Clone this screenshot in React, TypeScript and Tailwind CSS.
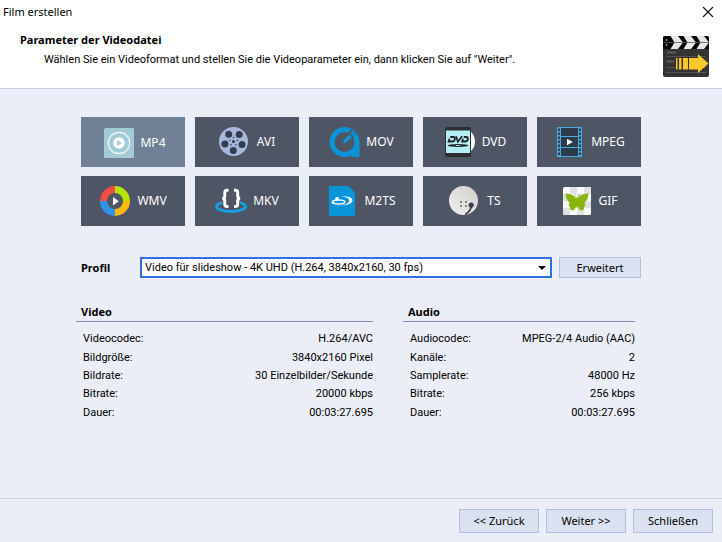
import React from "react";

type Row = [string, string];

const videoRows: Row[] = [
  ["Videocodec:", "H.264/AVC"],
  ["Bildgröße:", "3840x2160 Pixel"],
  ["Bildrate:", "30 Einzelbilder/Sekunde"],
  ["Bitrate:", "20000 kbps"],
  ["Dauer:", "00:03:27.695"],
];

const audioRows: Row[] = [
  ["Audiocodec:", "MPEG-2/4 Audio (AAC)"],
  ["Kanäle:", "2"],
  ["Samplerate:", "48000 Hz"],
  ["Bitrate:", "256 kbps"],
  ["Dauer:", "00:03:27.695"],
];

function Svg({ children }: { children: React.ReactNode }) {
  return (
    <svg viewBox="0 0 32 32" className="size-8 shrink-0" aria-hidden="true">
      {children}
    </svg>
  );
}

const Mp4Icon = () => (
  <Svg>
    <rect x="2" y="1" width="30" height="30" rx="1.5" fill="#a2cbd5" />
    <circle cx="17" cy="16" r="10.7" fill="none" stroke="#f4fafb" strokeWidth="1.2" />
    <circle cx="17" cy="16" r="5.8" fill="#fff" />
    <path d="M15.2 12.9v6.2l4.9-3.1z" fill="#a2cbd5" />
  </Svg>
);

const AviIcon = () => (
  <Svg>
    <circle cx="14.5" cy="15.5" r="14.5" fill="#a9b7dd" />
    <g fill="#333d50">
      <circle cx="9.7" cy="8.2" r="3.5" />
      <circle cx="20.2" cy="8.5" r="3.5" />
      <circle cx="5.9" cy="18" r="3.5" />
      <circle cx="23" cy="18.6" r="3.5" />
      <circle cx="14.3" cy="24.5" r="3.5" />
      <circle cx="14.5" cy="15.5" r="1.6" />
      <circle cx="14.5" cy="11.5" r=".8" />
      <circle cx="18.3" cy="14.2" r=".8" />
      <circle cx="16.9" cy="18.7" r=".8" />
      <circle cx="12.1" cy="18.7" r=".8" />
      <circle cx="10.7" cy="14.2" r=".8" />
    </g>
  </Svg>
);

const MovIcon = () => (
  <Svg>
    <path
      fillRule="evenodd"
      fill="#0b93d6"
      d="M16.500 1a15 15 0 0 1 15 15v15h-7l-2-1.200A15 15 0 1 1 16.500 1zM16.500 6a10 10 0 1 0 0 20 10 10 0 0 0 0-20z"
    />
    <path d="m18 9 5-5.500 5 4.500-5 5z" fill="#4e5565" />
    <path d="M15.300 14.800 21.200 8.500l2.700 2.700-6.200 6h-2.400z" fill="#0b93d6" />
    <path d="m22.200 7.500 2.200-2.200 2.700 2.600-2.200 2.300z" fill="#0b93d6" />
  </Svg>
);

const DvdIcon = () => (
  <Svg>
    <circle cx="17.5" cy="15.5" r="13.5" fill="#fff" />
    <rect x="1" y="1" width="26" height="30" rx="1.5" fill="#2c2f31" />
    <rect x="2" y="4.5" width="24" height="22.5" fill="#b5edf2" />
    <g fill="none" stroke="#202628" strokeWidth="1.800">
      <path d="M6.2 11h3.3c2.2 0 2 4.5-1.7 4.5H4.6l.9-2.8" />
      <path d="M12 10.3l1.9 5.4 4.2-5.4" />
      <path d="M19.8 11h2.6c2.4 0 2 4.5-1.6 4.5h-2.6l.8-2.8" />
    </g>
    <ellipse cx="14" cy="19.500" rx="10.500" ry="1.500" fill="#202628" />
    <ellipse cx="14" cy="19.500" rx="2.500" ry=".5" fill="#b5edf2" />
  </Svg>
);

const MpegIcon = () => (
  <Svg>
    <rect x="4" y="1" width="25" height="30" rx="1" fill="#49abe0" />
    <g fill="#2c3a4a">
      <rect x="8" y="2" width="17" height="8" />
      <rect x="8" y="11" width="17" height="10" />
      <rect x="8" y="22" width="17" height="8" />
      {[2, 6, 10, 14, 18, 22, 26].map((y) => (
        <React.Fragment key={y}>
          <rect x="5" y={y + 0.5} width="2" height="2.5" />
          <rect x="26" y={y + 0.5} width="2" height="2.5" />
        </React.Fragment>
      ))}
    </g>
    <path d="M14 12.7v6.6l5.8-3.3z" fill="#fff" />
  </Svg>
);

const WmvIcon = () => (
  <Svg>
    <g fill="none" strokeWidth="7">
      <path d="M4.5 16A11.5 11.5 0 0 1 16 4.5" stroke="#f04d45" />
      <path d="M16 4.5A11.5 11.5 0 0 1 27.5 16" stroke="#b6e600" />
      <path d="M27.5 16A11.5 11.5 0 0 1 16 27.5" stroke="#fdba04" />
      <path d="M16 27.5A11.5 11.5 0 0 1 4.5 16" stroke="#2f94e9" />
    </g>
    <path d="M14 12v8.4l5.8-4.2z" fill="#fff" />
  </Svg>
);

const MkvIcon = () => (
  <Svg>
    <ellipse cx="16" cy="21.5" rx="14.5" ry="5" fill="none" stroke="#12a2e6" strokeWidth="2.8" />
    <rect x="7" y="12" width="18" height="10" fill="#4e5565" />
    <g fill="none" stroke="#fff" strokeWidth="3">
      <path d="M13.5 5.2H12c-1.8 0-2.2.8-2.2 2.4v3.2c0 1.6-.8 2.7-2.5 2.7 1.7 0 2.5 1.1 2.5 2.7v2.8c0 1.6.4 2.4 2.2 2.4h1.5" />
      <path d="M19 5.2h1.5c1.8 0 2.2.8 2.2 2.4v3.2c0 1.6.8 2.7 2.5 2.7-1.7 0-2.5 1.1-2.5 2.7v2.8c0 1.6-.4 2.4-2.2 2.4H19" />
    </g>
  </Svg>
);

const M2tsIcon = () => (
  <Svg>
    <path d="M4 1h18l7 6.5V30a1 1 0 0 1-1 1H4a1 1 0 0 1-1-1V2a1 1 0 0 1 1-1z" fill="#0894d8" />
    <path
      fill="#fff"
      d="M14.500 11.300c7-.500 12 1.200 12 4 0 3.200-5 5.200-11.500 4.900 5-.4 8.300-2.400 8.300-4.700 0-2.200-3.300-3.700-8.800-4.200z"
    />
    <path d="M9.800 12h3.200l-.9 3H9z" fill="#fff" />
    <ellipse cx="12.700" cy="17" rx="6.200" ry="2" fill="none" stroke="#fff" strokeWidth="1.500" />
    <path d="M5.500 17h3.200l-.8 1.700H6z" fill="#fff" />
  </Svg>
);

const TsIcon = () => (
  <Svg>
    <defs>
      <linearGradient id="dish" x1="0" y1="1" x2="1" y2="0">
        <stop offset="0" stopColor="#f0f0ee" />
        <stop offset="1" stopColor="#cfcfcf" />
      </linearGradient>
    </defs>
    <circle cx="14.5" cy="15.5" r="14.5" fill="url(#dish)" />
    <g fill="#85878a">
      <rect x="11" y="16" width="2" height="2" />
      <rect x="16" y="16" width="2" height="2" />
      <rect x="11" y="20" width="2" height="2" />
      <rect x="16" y="20" width="2" height="2" />
    </g>
    <path d="M22.5 20c-.3 4-2.5 7.3-6.3 9.5" fill="none" stroke="#3a3c40" strokeWidth="1.8" />
    <circle cx="22.2" cy="20" r="2.6" fill="#3a3c40" />
  </Svg>
);

const GifIcon = () => (
  <Svg>
    <rect x="3" y="2" width="28" height="28" rx="1.5" fill="#fafafa" />
    <g fill="#e0e1e3">
      {[0, 1, 2, 3].map((r) =>
        [0, 1, 2, 3].map((c) =>
          (r + c) % 2 === 1 ? (
            <rect key={`${r}-${c}`} x={3 + c * 7} y={2 + r * 7} width="7" height="7" />
          ) : null,
        ),
      )}
    </g>
    <path
      fill="#89b409"
      d="M16.2 13.5c-2-3-5-4.5-10.5-5 0 3.5 1.2 7.5 4 9.3-1.5 1-1 3 .2 4.2.2 2 .8 3.500 2 3.500 2.300 0 3.600-2 4.300-4.500l.8 2.500.8-2.500c.7 2.500 2 4.500 4.300 4.500 1.200 0 1.800-1.500 2-3.500 1.200-1.200 1.700-3.200.2-4.200 2.800-1.800 4-5.800 4-9.300-5.500.5-8.500 2-10.500 5l-.8-.8z"
    />
    <path d="M16.5 13 14 8.5M17.500 13 20 8.500" stroke="#89b409" strokeWidth=".6" />
  </Svg>
);

const formats = [
  { name: "MP4", Icon: Mp4Icon },
  { name: "AVI", Icon: AviIcon },
  { name: "MOV", Icon: MovIcon },
  { name: "DVD", Icon: DvdIcon },
  { name: "MPEG", Icon: MpegIcon },
  { name: "WMV", Icon: WmvIcon },
  { name: "MKV", Icon: MkvIcon },
  { name: "M2TS", Icon: M2tsIcon },
  { name: "TS", Icon: TsIcon },
  { name: "GIF", Icon: GifIcon },
];

function ClapperIcon() {
  return (
    <svg viewBox="0 0 46 41" className="h-[41px] w-[46px] shrink-0" aria-hidden="true">
      <defs>
        <clipPath id="board">
          <rect width="46" height="41" rx="2" />
        </clipPath>
      </defs>
      <g clipPath="url(#board)">
        <rect width="46" height="41" fill="#343434" />
        <rect width="46" height="13" fill="#060606" />
        <g fill="#e6e6e6">
          <path d="M7.5 0H15l5 6.5-5 6.5H7.5l4-6.5z" />
          <path d="M20.5 0H28l5 6.5-5 6.5h-7.5l4-6.5z" />
          <path d="M33.5 0H41l5 6.5-5 6.5h-7.5l4-6.5z" />
          <circle cx="3.5" cy="4" r=".8" />
          <circle cx="3.5" cy="9" r=".8" />
        </g>
        <path d="M0 6.5h46" stroke="#555" strokeWidth=".8" />
        <g stroke="#6a6a6a" strokeWidth="1">
          <path d="M3 20.5h40M3 31.5h40M3 36.5h40" opacity=".6" />
          <path d="M4 16.5h9M4 25.5h7" strokeWidth="2" strokeDasharray="1.5 .5" />
        </g>
        <g fill="#fdc72b">
          <path d="M13 22h1.5v11.5H13zM16 22h2.5v11.5H16zM20 22h5v11.5h-5z" />
          <path d="M26 22h9v-4l10.500 9.500L35 37v-3.500h-9z" />
        </g>
      </g>
    </svg>
  );
}

function InfoTable({ title, rows }: { title: string; rows: Row[] }) {
  return (
    <section>
      <h2 className="border-b border-[#7d90b0] pl-[5px] font-['Noto_Sans',sans-serif] leading-[18px] font-bold">
        {title}
      </h2>
      <table className="mt-2 h-[92px] w-full">
        <tbody>
          {rows.map(([label, value]) => (
            <tr key={label}>
              <th scope="row" className="p-0 pl-[7px] text-left font-normal">
                {label}
              </th>
              <td className="p-0 text-right">{value}</td>
            </tr>
          ))}
        </tbody>
      </table>
    </section>
  );
}

function PlainButton({ children, className }: { children: React.ReactNode; className: string }) {
  return (
    <button
      type="button"
      className={`border border-[#b0c0df] bg-[#dae2f1] text-center font-['Noto_Sans',sans-serif] ${className}`}
    >
      {children}
    </button>
  );
}

export default function App() {
  return (
    <div className="flex min-h-screen flex-col bg-[#ebeef6] font-[Roboto,sans-serif] text-[11px] leading-4 text-black">
      <header className="border-b border-[#c8d0e4] bg-white pb-[11px]">
        <div className="flex h-6 items-center justify-between pr-2 pl-[3px]">
          <h1 className="font-['Noto_Sans',sans-serif]">Film erstellen</h1>
          <button type="button" aria-label="Schließen" className="flex size-3 items-center justify-center">
            <svg viewBox="0 0 12 12" className="size-3" stroke="#111" strokeWidth="1.1">
              <path d="M1 1l10 10M11 1 1 11" />
            </svg>
          </button>
        </div>
        <div className="flex items-end justify-between pr-[13px] pl-5">
          <div className="self-start pt-2">
            <h2 className="font-['Noto_Sans',sans-serif] font-bold">Parameter der Videodatei</h2>
            <p className="mt-1 pl-6">
              Wählen Sie ein Videoformat und stellen Sie die Videoparameter ein, dann klicken Sie auf "Weiter".
            </p>
          </div>
          <div className="pt-3">
            <ClapperIcon />
          </div>
        </div>
      </header>

      <main className="mx-auto w-full max-w-[570px] flex-1 pt-7">
        <div className="grid grid-cols-5 gap-x-2.5 gap-y-[9px] px-[5px]">
          {formats.map(({ name, Icon }) => (
            <button
              key={name}
              type="button"
              aria-pressed={name === "MP4"}
              className="flex h-[50px] items-center justify-center gap-1.5 bg-[#4e5565] font-['Noto_Sans',sans-serif] text-[12px] text-white aria-pressed:bg-[#708095] aria-pressed:pt-0.5 aria-pressed:pl-0.5"
            >
              <Icon />
              {name}
            </button>
          ))}
        </div>

        <div className="mt-[31px] flex items-center px-[5px]">
          <label htmlFor="profile" className="w-[59px] font-['Noto_Sans',sans-serif] font-bold">
            Profil
          </label>
          <div className="relative flex-1">
            <select
              id="profile"
              className="block h-[21px] w-full appearance-none border-2 border-[#3070e0] bg-white pr-5 pl-[3px] leading-4 outline-none"
            >
              <option>Video für slideshow - 4K UHD (H.264, 3840x2160, 30 fps)</option>
            </select>
            <svg viewBox="0 0 8 4" className="pointer-events-none absolute top-[9px] right-1.5 h-1 w-2">
              <path d="M0 0h8L4 4z" />
            </svg>
          </div>
          <PlainButton className="ml-[7px] h-[21px] w-[82px]">Erweitert</PlainButton>
        </div>

        <div className="mt-[25px] grid grid-cols-[297fr_232fr] gap-[30px] pr-[11px]">
          <InfoTable title="Video" rows={videoRows} />
          <InfoTable title="Audio" rows={audioRows} />
        </div>
      </main>

      <footer className="flex justify-end gap-[7px] border-t border-[#c8d3e6] pt-2.5 pr-[9px] pb-[9px]">
        <PlainButton className="h-6 w-20">&lt;&lt; Zurück</PlainButton>
        <PlainButton className="h-6 w-20">Weiter &gt;&gt;</PlainButton>
        <PlainButton className="h-6 w-20">Schließen</PlainButton>
      </footer>
    </div>
  );
}
